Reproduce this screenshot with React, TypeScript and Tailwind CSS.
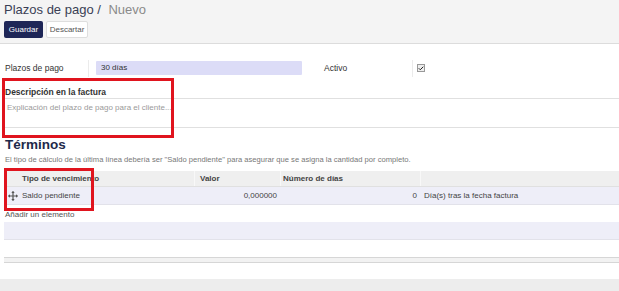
import { Check } from "lucide-react"

function MoveIcon() {
  return (
    <svg width="10" height="10" viewBox="0 0 10 10" className="text-[#555]">
      <path d="M5 0.5 L5 9.5 M0.5 5 L9.5 5" stroke="currentColor" strokeWidth="1.2" />
      <path d="M5 0 L3.3 2 L6.7 2 Z M5 10 L3.3 8 L6.7 8 Z M0 5 L2 3.3 L2 6.7 Z M10 5 L8 3.3 L8 6.7 Z" fill="currentColor" />
    </svg>
  )
}

export default function App() {
  return (
    <div className="relative w-[619px] h-[291px] bg-[#ededed] font-['Liberation_Sans',Arial,sans-serif] overflow-hidden">
      {/* control panel */}
      <div className="h-[44px] bg-[#f4f4f4] border-b border-[#dcdcdc] pl-[4px] pt-[3px]">
        <div className="text-[13px] leading-[14px] text-[#3a3f55]">
          Plazos de pago / <span className="ml-[4px] text-[#8a8a8a]">Nuevo</span>
        </div>
        <div className="mt-[4px] flex gap-[3px]">
          <button className="h-[17px] w-[39px] rounded-[2px] bg-[#1e2657] text-[8px] text-white">Guardar</button>
          <button className="h-[17px] w-[42px] rounded-[2px] border border-[#dedede] bg-white text-[8px] text-[#555]">
            Descartar
          </button>
        </div>
      </div>

      {/* form sheet */}
      <div className="h-[235px] bg-white">
        <div className="flex items-center pt-[14px] h-[34px]">
          <div className="w-[88px] pl-[5px] text-[8.5px] text-[#333]">Plazos de pago</div>
          <div className="w-px h-[17px] bg-[#ebebeb]"></div>
          <div className="ml-[7px] w-[206px] h-[14px] bg-[#dcdcf7] rounded-[1px] pl-[5px] text-[8px] leading-[14px] text-[#333]">
            30 días
          </div>
          <div className="ml-[22px] w-[88px] text-[8.5px] text-[#333]">Activo</div>
          <div className="w-px h-[17px] bg-[#ebebeb]"></div>
          <div className="ml-[4px] w-[8px] h-[8px] border border-[#999] bg-[#eee] flex items-center justify-center">
            <Check size={7} strokeWidth={4} className="text-[#222]" />
          </div>
        </div>

        <div className="mt-[9px] pl-[5px] text-[8.5px] font-semibold text-[#333] leading-[10px]">Descripción en la factura</div>
        <div className="ml-[5px] mt-[1px] h-[30px] border-t border-b border-[#e0e0e0] pl-[2px] pt-[3px] text-[8px] text-[#9a9a9a]">
          Explicación del plazo de pago para el cliente...
        </div>

        <div className="mt-[9px] pl-[5px] text-[13.5px] leading-[15px] font-bold text-[#1e2a4a]">Términos</div>
        <div className="mt-[3px] pl-[5px] text-[7.6px] leading-[10px] text-[#777]">
          El tipo de cálculo de la última línea debería ser "Saldo pendiente" para asegurar que se asigna la cantidad por completo.
        </div>

        <div className="mt-[6px] ml-[4px] text-[8px] text-[#444]">
          <div className="flex h-[16px] items-center bg-[#efefef] border-b border-[#e0e0e0] font-semibold text-[#444]">
            <div className="w-[14px]"></div>
            <div className="w-[176px] pl-[4px]">Tipo de vencimiento</div>
            <div className="w-px h-full bg-[#f8f8f8]"></div>
            <div className="w-[85px] pl-[5px]">Valor</div>
            <div className="w-px h-full bg-[#f8f8f8]"></div>
            <div className="w-[139px] pl-[2px]">Número de días</div>
            <div className="w-px h-full bg-[#f8f8f8]"></div>
            <div className="flex-1"></div>
          </div>
          <div className="flex h-[18px] items-center bg-[#eeeef8] border-b border-[#e2e2ea]">
            <div className="w-[14px] pl-[4px] flex items-center"><MoveIcon /></div>
            <div className="w-[176px] pl-[4px]">Saldo pendiente</div>
            <div className="w-[86px] pr-[3px] text-right">0,000000</div>
            <div className="w-[140px] pr-[3px] text-right">0</div>
            <div className="flex-1 pl-[4px]">Día(s) tras la fecha factura</div>
          </div>
          <div className="h-[17px] pl-[1px] pt-[4px] text-[8px] text-[#555]">Añadir un elemento</div>
          <div className="h-[18px] bg-[#eeeef8] border-b border-[#e2e2ea]"></div>
          <div className="mt-[17px] h-[6px] bg-[#f2f2f2] border-t border-b border-[#d6d6d6]"></div>
        </div>
      </div>

      {/* highlight boxes */}
      <div className="absolute left-[2px] top-[78px] w-[172px] h-[60px] border-[3px] border-[#e0141e]"></div>
      <div className="absolute left-[4px] top-[168px] w-[90px] h-[43px] border-[3px] border-[#e0141e]"></div>
    </div>
  )
}
